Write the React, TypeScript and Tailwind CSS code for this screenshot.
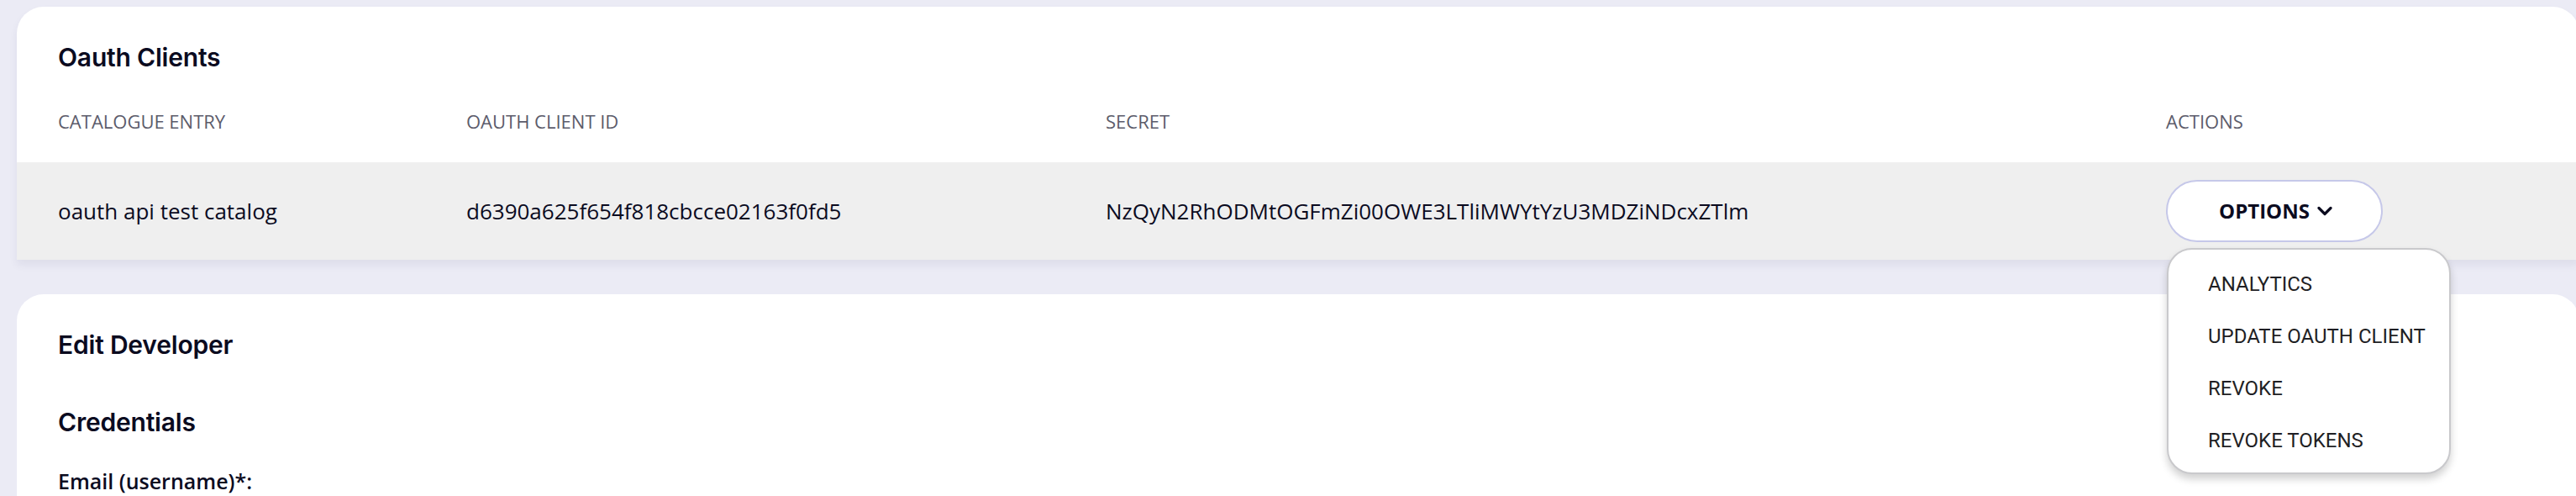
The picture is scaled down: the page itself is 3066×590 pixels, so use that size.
import React from "react";

const heading = "font-['Inter','Noto_Sans',sans-serif] font-semibold text-[30px] leading-[36px] text-[#0b0b1f] tracking-[-0.2px]";
const body = "font-['Open_Sans','Noto_Sans',sans-serif]";

function Chevron() {
  return (
    <svg width="20" height="14" viewBox="0 0 20 14" className="ml-[8px]">
      <path d="M3 3.5 L10 10.5 L17 3.5" fill="none" stroke="#0b0b1f" strokeWidth="3.2" strokeLinecap="round" strokeLinejoin="round" />
    </svg>
  );
}

function OptionsMenu() {
  const items = ["ANALYTICS", "UPDATE OAUTH CLIENT", "REVOKE", "REVOKE TOKENS"];
  return (
    <div className="absolute left-[2579px] top-[295px] w-[338px] h-[269px] rounded-[30px] border-2 border-[#c9c9cc] bg-white shadow-[0_6px_10px_rgba(0,0,0,0.18)] pt-[10px]">
      {items.map((it) => (
        <div
          key={it}
          className="h-[62px] flex items-center pl-[47px] font-['Roboto',sans-serif] text-[24px] text-[#1f1f24]"
        >
          {it}
        </div>
      ))}
    </div>
  );
}

export default function App() {
  return (
    <div className="relative h-[590px] w-[3066px] overflow-hidden bg-[#ebebf5] pl-[20px] pt-[8px]">
      {/* oauth clients card */}
      <div className="w-[3050px] rounded-t-[32px] bg-white shadow-[0_6px_10px_rgba(60,60,110,0.08)]">
        <h2 className={`${heading} pl-[49px] pt-[42px]`}>Oauth Clients</h2>
        <div className={`grid grid-cols-[486px_761px_1262px_1fr] pl-[49px] h-[88px] pb-[10px] items-center ${body} text-[22px] text-[#5c5c6b] mt-[19px]`}>
          <div>CATALOGUE ENTRY</div>
          <div>OAUTH CLIENT ID</div>
          <div>SECRET</div>
          <div>ACTIONS</div>
        </div>
        <div className={`grid grid-cols-[486px_761px_1262px_1fr] pl-[49px] h-[116px] items-center bg-[#efefef] ${body} text-[26px] text-[#0b0b1f]`}>
          <div>oauth api test catalog</div>
          <div>d6390a625f654f818cbcce02163f0fd5</div>
          <div>NzQyN2RhODMtOGFmZi00OWE3LTliMWYtYzU3MDZiNDcxZTlm</div>
          <div>
            <button className="flex items-center justify-center w-[258px] h-[74px] rounded-full border-2 border-[#c6c8e9] bg-white font-['Open_Sans',sans-serif] font-bold text-[24px] text-[#0b0b1f] pl-[4px]">
              OPTIONS
              <Chevron />
            </button>
          </div>
        </div>
      </div>

      {/* edit developer card */}
      <div className="mt-[41px] w-[3050px] h-[300px] rounded-t-[32px] bg-white">
        <h2 className={`${heading} pl-[49px] pt-[42px]`}>Edit Developer</h2>
        <h3 className={`${heading} pl-[49px] mt-[56px]`}>Credentials</h3>
        <div className={`${body} pl-[49px] mt-[34px] text-[25px] font-semibold text-[#0b0b1f]`}>Email (username)*:</div>
      </div>

      <OptionsMenu />
    </div>
  );
}
